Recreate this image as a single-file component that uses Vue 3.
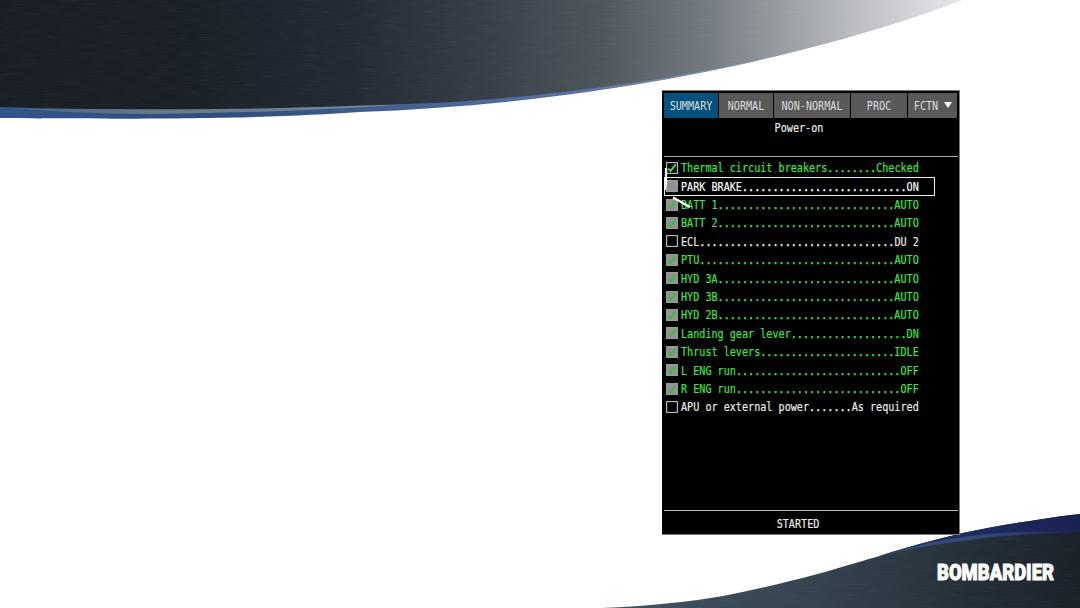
<script setup>
const LINE_WIDTH = 39

const tabs = [
  { label: 'SUMMARY', kind: 'summary' },
  { label: 'NORMAL', kind: 'normal' },
  { label: 'NON-NORMAL', kind: 'non-normal' },
  { label: 'PROC', kind: 'proc' },
  { label: 'FCTN', kind: 'fctn', menu: true },
]

const items = [
  { name: 'Thermal circuit breakers', value: 'Checked', state: 'done', box: 'ticked' },
  { name: 'PARK BRAKE', value: 'ON', state: 'current', box: 'sensed' },
  { name: 'BATT 1', value: 'AUTO', state: 'done', box: 'sensed-ticked' },
  { name: 'BATT 2', value: 'AUTO', state: 'done', box: 'sensed-ticked' },
  { name: 'ECL', value: 'DU 2', state: 'open', box: 'empty' },
  { name: 'PTU', value: 'AUTO', state: 'done', box: 'sensed-ticked' },
  { name: 'HYD 3A', value: 'AUTO', state: 'done', box: 'sensed-ticked' },
  { name: 'HYD 3B', value: 'AUTO', state: 'done', box: 'sensed-ticked' },
  { name: 'HYD 2B', value: 'AUTO', state: 'done', box: 'sensed-ticked' },
  { name: 'Landing gear lever', value: 'DN', state: 'done', box: 'sensed-ticked' },
  { name: 'Thrust levers', value: 'IDLE', state: 'done', box: 'sensed-ticked' },
  { name: 'L ENG run', value: 'OFF', state: 'done', box: 'sensed-ticked' },
  { name: 'R ENG run', value: 'OFF', state: 'done', box: 'sensed-ticked' },
  { name: 'APU or external power', value: 'As required', state: 'open', box: 'empty' },
]

const dots = (item) => '.'.repeat(LINE_WIDTH - item.name.length - item.value.length)
</script>

<template>
  <main class="slide">
    <svg class="backdrop" viewBox="0 0 1080 608" aria-hidden="true">
      <defs>
        <linearGradient id="steel" gradientUnits="userSpaceOnUse" x1="0" y1="40" x2="965" y2="0">
          <stop offset="0" stop-color="#181e23" />
          <stop offset="0.2" stop-color="#1b2128" />
          <stop offset="0.36" stop-color="#222a34" />
          <stop offset="0.5" stop-color="#363f48" />
          <stop offset="0.62" stop-color="#4e565d" />
          <stop offset="0.73" stop-color="#737a80" />
          <stop offset="0.83" stop-color="#a1a6aa" />
          <stop offset="0.9" stop-color="#c2c3c7" />
          <stop offset="1" stop-color="#e8e8eb" />
        </linearGradient>
        <linearGradient id="rim" x1="0" x2="1" y1="0" y2="0">
          <stop offset="0" stop-color="#33548b" />
          <stop offset="0.25" stop-color="#304e7c" />
          <stop offset="0.6" stop-color="#5874a4" />
          <stop offset="0.76" stop-color="#8995aa" />
          <stop offset="1" stop-color="#d3d4d8" />
        </linearGradient>
        <linearGradient id="glint" x1="0" x2="1" y1="0" y2="0">
          <stop offset="0" stop-color="#42608b" />
          <stop offset="0.22" stop-color="#687987" />
          <stop offset="0.6" stop-color="#73859a" />
          <stop offset="1" stop-color="#8998ad" />
        </linearGradient>
        <linearGradient id="footer" gradientUnits="userSpaceOnUse" x1="640" y1="570" x2="1080" y2="608">
          <stop offset="0" stop-color="#405161" />
          <stop offset="0.4" stop-color="#35434f" />
          <stop offset="0.75" stop-color="#242e37" />
          <stop offset="1" stop-color="#1a2129" />
        </linearGradient>
        <linearGradient id="navy" x1="0" x2="1" y1="0" y2="0">
          <stop offset="0" stop-color="#263d68" />
          <stop offset="0.4" stop-color="#202c62" />
          <stop offset="1" stop-color="#182352" />
        </linearGradient>
        <linearGradient id="haze" x1="0" x2="1" y1="0" y2="0">
          <stop offset="0" stop-color="#385178" />
          <stop offset="0.5" stop-color="#344973" />
          <stop offset="1" stop-color="#202d5d" />
        </linearGradient>
        <filter id="brushed" x="0" y="0" width="100%" height="100%">
          <feTurbulence type="fractalNoise" baseFrequency="0.05 0.7" numOctaves="2" seed="4" />
          <feColorMatrix values="0 0 0 0 1  0 0 0 0 1  0 0 0 0 1  0.45 0 0 0 -0.19" />
          <feComposite in2="SourceGraphic" operator="in" />
        </filter>
      </defs>
      <path fill="url(#rim)" d="M0 0H962C905 22 823 47 720 69C600 94 475 108 360 112C285 117 205 120 0 118Z" />
      <path fill="url(#glint)" d="M0 107Q70 114 150 114Q255 113 360 107.5Q540 96 720 67.5V60L360 100L0 105Z" />
      <path fill="url(#steel)" d="M0 0H962C905 22 823 47 720 68C600 91 475 104 360 105.5C270 109 190 110 120 109Q55 109 0 107Z" />
      <path filter="url(#brushed)" opacity=".15" d="M0 0H962C905 22 823 47 720 68C600 91 475 104 360 105.5C270 109 190 110 120 109Q55 109 0 107Z" />
      <path fill="url(#footer)" d="M602 608Q670 605 723 596Q755 590 790 581C825 573 850 564 880 556Q920 543 963 533Q1000 525 1030 521Q1060 516 1080 514V608Z" />
      <path filter="url(#brushed)" opacity=".14" d="M602 608Q670 605 723 596Q755 590 790 581C825 573 850 564 880 556Q920 543 963 533Q1000 525 1030 521Q1060 516 1080 514V608Z" />
      <path fill="url(#navy)" d="M875 557Q920 543 963 533Q1000 525 1030 521Q1060 516 1080 514V532Q1000 535 955 542Q910 548 875 557Z" />
      <path fill="url(#haze)" d="M885 555Q930 541 970 536Q1020 530 1070 532Q1000 535 955 542Q915 547 885 555Z" />
    </svg>

    <section class="display">
      <nav class="tabs">
        <div v-for="tab in tabs" :key="tab.label" class="tab" :class="tab.kind">
          <span class="type">{{ tab.label }}</span>
          <svg v-if="tab.menu" class="arrow" viewBox="0 0 8 6"><path d="M0 0H8L4 6Z" /></svg>
        </div>
      </nav>
      <header class="title"><span class="type">Power-on</span></header>
      <ul class="checklist">
        <li v-for="item in items" :key="item.name" class="row" :class="item.state">
          <svg class="box" :class="item.box" viewBox="0 0 12 12">
            <rect x=".6" y=".6" width="10.8" height="10.8" />
            <path v-if="item.box.includes('ticked')" d="M2.3 6.5L4.5 9L9.8 2.4" />
          </svg>
          <span class="type">{{ item.name }}<span class="leader">{{ dots(item) }}</span>{{ item.value }}</span>
        </li>
      </ul>
      <footer class="status"><span class="type">STARTED</span></footer>
      <svg class="pointer" viewBox="0 0 30 46" aria-hidden="true">
        <path d="M4 2V17L3 24" />
        <path d="M11 31.5L28 41" />
      </svg>
    </section>

    <svg class="brand" viewBox="0 0 128 36">
      <text x="5" y="26" textLength="117" lengthAdjust="spacingAndGlyphs">BOMBARDIER</text>
    </svg>
  </main>
</template>

<style>
body {
  overflow: hidden;
  background: #fff;
}
</style>

<style scoped>
.slide {
  position: relative;
  box-sizing: border-box;
  width: 1080px;
  height: 608px;
  padding: 90px 0 0 662px;
  overflow: hidden;
  background: #fff;
}
.backdrop {
  position: absolute;
  inset: 0;
  width: 1080px;
  height: 608px;
}
.display {
  position: relative;
  box-sizing: border-box;
  display: flex;
  flex-direction: column;
  width: 298px;
  height: 445px;
  padding: 2px 1px 0 2px;
  border: 1px solid #777a80;
  border-left: 0;
  background: #000;
  color: #eee;
  font: 10.13px/18px "DejaVu Sans Mono", monospace;
}
.type {
  display: inline-block;
  white-space: pre;
  transform: translateY(0.2px) scaleY(1.13);
  -webkit-text-stroke: 0.15px currentColor;
}
.leader {
  -webkit-text-stroke: 0.35px currentColor;
}
.tabs {
  display: grid;
  grid-template-columns: 54px 54px 76px 56px 49px;
  gap: 1px;
  height: 25px;
}
.tab {
  display: flex;
  align-items: center;
  justify-content: center;
  gap: 6px;
  background: #595959;
  color: #dedede;
}
.tab.summary {
  background: #00527d;
}
.tab.fctn {
  padding-left: 1px;
}
.tab .type {
  -webkit-text-stroke: 0;
}
.arrow {
  width: 8px;
  height: 6px;
  margin-bottom: 2px;
  fill: #fff;
}
.title {
  height: 37px;
  padding: 1px 24px 0 0;
  border-bottom: 1px solid #aaa;
  text-align: center;
}
.checklist {
  display: flex;
  flex-direction: column;
  margin: 2px 23px 0 0;
  padding: 0;
  list-style: none;
}
.row {
  box-sizing: border-box;
  display: flex;
  align-items: center;
  gap: 3px;
  height: 18.42px;
  padding-left: 2px;
}
.done {
  color: #3ee749;
}
.current {
  outline: 1.3px solid #eee;
  outline-offset: -1px;
  color: #fff;
}
.box {
  flex: none;
  width: 12px;
  height: 12px;
  margin-bottom: 1px;
}
.box rect {
  fill: #000;
  stroke: #b5b5b5;
  stroke-width: 1.2;
}
.box path {
  fill: none;
  stroke: #46ed4a;
  stroke-width: 1.8;
}
.sensed rect,
.sensed-ticked rect {
  fill: #929292;
  stroke: #999;
}
.sensed-ticked path {
  stroke: #35bd40;
  stroke-width: 1.8;
}
.status {
  height: 19px;
  margin-top: auto;
  padding: 4px 26px 0 0;
  border-top: 1px solid #bbb;
  line-height: 17px;
  text-align: center;
}
.pointer {
  position: absolute;
  left: 0;
  top: 75px;
  width: 30px;
  height: 46px;
  fill: none;
  stroke: #fff;
  stroke-width: 2.2;
}
.brand {
  position: absolute;
  left: 932px;
  top: 554px;
  width: 128px;
  height: 36px;
  fill: #fff;
  stroke: #fff;
  stroke-width: 0.9;
  font: 900 21.5px Roboto, "Liberation Sans", sans-serif;
}
</style>
